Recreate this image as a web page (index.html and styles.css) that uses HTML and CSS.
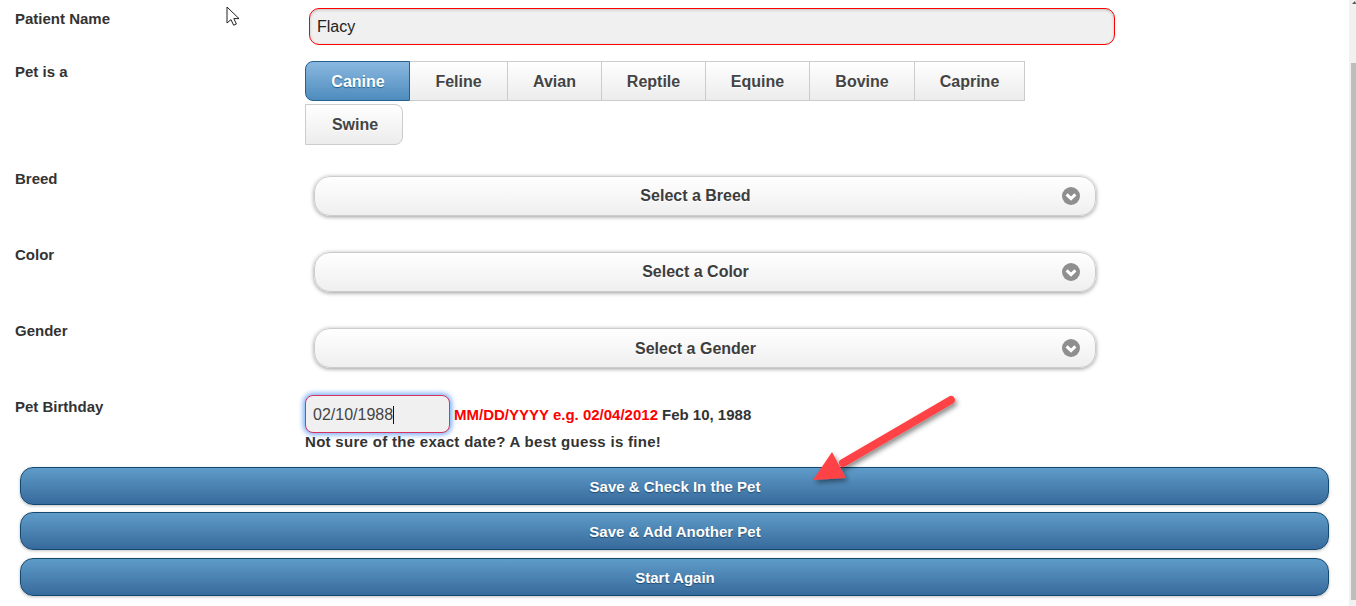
FILE: index.html
```html
<!DOCTYPE html>
<html lang="en">
<head>
<meta charset="utf-8">
<title>Add Pet</title>
<link rel="stylesheet" href="styles.css">
</head>
<body>
<main class="form">
  <div class="row row-name">
    <label class="label">Patient Name</label>
    <div class="control name-control"><input class="text-input name-input" type="text" value="Flacy"></div>
  </div>
  <div class="row row-species">
    <label class="label">Pet is a</label>
    <div class="control">
      <div class="seg-line">
        <span class="seg seg-active seg-first w-canine">Canine</span><span class="seg w-feline">Feline</span><span class="seg w-avian">Avian</span><span class="seg w-reptile">Reptile</span><span class="seg w-equine">Equine</span><span class="seg w-bovine">Bovine</span><span class="seg seg-last w-caprine">Caprine</span>
      </div>
      <div class="seg-line seg-line-2"><span class="seg seg-only w-swine">Swine</span></div>
    </div>
  </div>
  <div class="row row-select">
    <label class="label">Breed</label>
    <div class="control select-control"><div class="select">Select a Breed<svg class="chev" viewBox="0 0 18 18"><circle cx="9" cy="9" r="9" fill="#8f8f8f"/><path d="M4.6 7.4 9 11.6l4.4-4.2" fill="none" stroke="#fff" stroke-width="3"/></svg></div></div>
  </div>
  <div class="row row-select">
    <label class="label">Color</label>
    <div class="control select-control"><div class="select">Select a Color<svg class="chev" viewBox="0 0 18 18"><circle cx="9" cy="9" r="9" fill="#8f8f8f"/><path d="M4.6 7.4 9 11.6l4.4-4.2" fill="none" stroke="#fff" stroke-width="3"/></svg></div></div>
  </div>
  <div class="row row-select">
    <label class="label">Gender</label>
    <div class="control select-control"><div class="select select-low">Select a Gender<svg class="chev" viewBox="0 0 18 18"><circle cx="9" cy="9" r="9" fill="#8f8f8f"/><path d="M4.6 7.4 9 11.6l4.4-4.2" fill="none" stroke="#fff" stroke-width="3"/></svg></div></div>
  </div>
  <div class="row row-birthday">
    <label class="label">Pet Birthday</label>
    <div class="control">
      <div class="date-line">
        <div class="date-input">02/10/1988<span class="caret"></span></div>
        <span class="hint">MM/DD/YYYY e.g. 02/04/2012</span>
        <span class="parsed">Feb 10, 1988</span>
      </div>
      <p class="note">Not sure of the exact date? A best guess is fine!</p>
    </div>
  </div>
  <div class="actions">
    <button class="action" type="button">Save &amp; Check In the Pet</button>
    <button class="action" type="button">Save &amp; Add Another Pet</button>
    <button class="action" type="button">Start Again</button>
  </div>
</main>

<svg class="cursor" viewBox="0 0 14 20"><path d="M1 1v16l4-3.4 2.6 5.6 2.8-1.2-2.6-5.4H13Z" fill="#fff" stroke="#222" stroke-width="1"/></svg>

<svg class="arrow" viewBox="0 0 170 110">
  <defs><filter id="sh" x="-20%" y="-20%" width="150%" height="150%"><feDropShadow dx="2" dy="3" stdDeviation="2.5" flood-color="#000" flood-opacity=".45"/></filter></defs>
  <g filter="url(#sh)">
    <path d="M146 15 38 78" fill="none" stroke="#ff4345" stroke-width="8" stroke-linecap="round"/>
    <path d="M8 95 27 67 41 93Z" fill="#ff4345"/>
  </g>
</svg>

<div class="scrollbar"><span class="scroll-up"></span><span class="scroll-thumb"></span></div>
</body>
</html>
```
FILE: styles.css
```css
* { box-sizing: border-box; }
html, body { margin: 0; height: 100%; overflow: hidden; background: #fff; }
body {
  width: 1356px;
  height: 606px;
  position: relative;
  font-family: "Liberation Sans", Arial, sans-serif;
  color: #333;
}
.form { display: flex; flex-direction: column; }
.row { display: flex; }
.label {
  width: 305px;
  flex: none;
  padding-left: 15px;
  padding-top: 2px;
  font-size: 15px;
  font-weight: 700;
  line-height: 18px;
  color: #333;
  text-shadow: 0 1px 0 #fff;
}
.control { flex: none; }

.row-name { height: 61px; padding-top: 8px; }
.name-control { padding-left: 4px; }
.text-input {
  display: block;
  width: 806px;
  height: 37px;
  padding: 0 7px;
  border: 1px solid #f00;
  border-radius: 10px;
  background: #f0f0f0;
  box-shadow: inset 0 1px 3px rgba(0,0,0,.2);
  font: 16px "Liberation Sans", Arial, sans-serif;
  color: #222;
  outline: none;
}

.row-species { height: 107px; }
.seg-line { display: flex; height: 40px; }
.seg-line-2 { margin-top: 3px; height: 41px; }
.seg {
  display: flex;
  align-items: center;
  justify-content: center;
  height: 100%;
  padding-top: 2px;
  border: 1px solid #ccc;
  border-left-width: 0;
  background: linear-gradient(#fff, #ececec);
  font-size: 16px;
  font-weight: 700;
  color: #444;
  text-shadow: 0 1px 0 #fff;
}
.seg-first { border-radius: 8px 0 0 8px; border-left-width: 1px; padding-left: 1px; }
.seg-only { border-left-width: 1px; border-radius: 0 8px 8px 0; padding-top: 0; padding-left: 2px; }
.seg-active {
  border-color: #23618f;
  background: linear-gradient(#8ab8e0, #4e8cbd);
  color: #fff;
  text-shadow: 0 1px 1px #1f5f8f;
}
.w-canine { width: 105px; }
.w-feline { width: 98px; }
.w-avian { width: 94px; }
.w-reptile { width: 104px; }
.w-equine { width: 104px; }
.w-bovine { width: 105px; }
.w-caprine { width: 110px; }
.w-swine { width: 98px; }

.row-select { height: 76px; }
.select-control { padding: 8px 0 0 9px; }
.select {
  position: relative;
  width: 782px;
  height: 40px;
  padding-right: 19px;
  border: 1px solid #ccc;
  border-radius: 16px;
  background: linear-gradient(#fff, #efefef);
  box-shadow: 0 1px 4px rgba(0,0,0,.4);
  font-size: 16px;
  font-weight: 700;
  line-height: 37px;
  text-align: center;
  color: #3d3d3d;
  text-shadow: 0 1px 0 #fff;
}
.select-low { line-height: 39px; }
.chev {
  position: absolute;
  right: 15px;
  top: 10px;
  width: 18px;
  height: 18px;
}

.row-birthday { height: 72px; margin-top: -1px; }
.row-birthday .label { padding-top: 3px; }
.date-line { display: flex; align-items: center; height: 38px; font-size: 15px; font-weight: 700; }
.date-input {
  display: flex;
  align-items: center;
  width: 145px;
  height: 38px;
  padding: 2px 0 0 7px;
  margin-right: 4px;
  border: 1px solid #d8335f;
  border-radius: 8px;
  background: #f0f0f0;
  box-shadow: 0 0 5px 2px #7fb0f7;
  font-size: 16px;
  font-weight: 400;
  color: #444;
}
.caret { display: inline-block; width: 1px; height: 18px; background: #111; }
.hint { color: #f00; margin-right: 4px; }
.parsed { color: #333; }
.note { margin: 0; font-size: 15px; font-weight: 700; letter-spacing: .3px; line-height: 18px; color: #333; }

.actions { display: flex; flex-direction: column; gap: 7px; padding-left: 20px; }
.actions .action:nth-child(3) { margin-top: 1px; }
.action {
  display: block;
  width: 1309px;
  height: 38px;
  padding: 0 0 0 1px;
  border: 1px solid #14496f;
  border-radius: 13px;
  background: linear-gradient(#5f9cc9, #376a9c);
  box-shadow: 0 1px 3px rgba(0,0,0,.25);
  font: 700 15px "Liberation Sans", Arial, sans-serif;
  color: #fff;
  text-shadow: 0 1px 1px #1f4a70;
}

.cursor { position: absolute; left: 226px; top: 6px; width: 14px; height: 20px; }
.arrow { position: absolute; left: 805px; top: 385px; width: 170px; height: 110px; }

.scrollbar { position: absolute; left: 1349px; top: 0; width: 7px; height: 606px; background: #f1f1f1; }
.scroll-thumb { position: absolute; left: 2px; top: 63px; width: 5px; height: 537px; background: #bdbdbd; }
.scroll-up {
  position: absolute;
  left: 3px;
  top: 1px;
  border-left: 3px solid transparent;
  border-right: 1px solid transparent;
  border-bottom: 3px solid #555;
}
```
